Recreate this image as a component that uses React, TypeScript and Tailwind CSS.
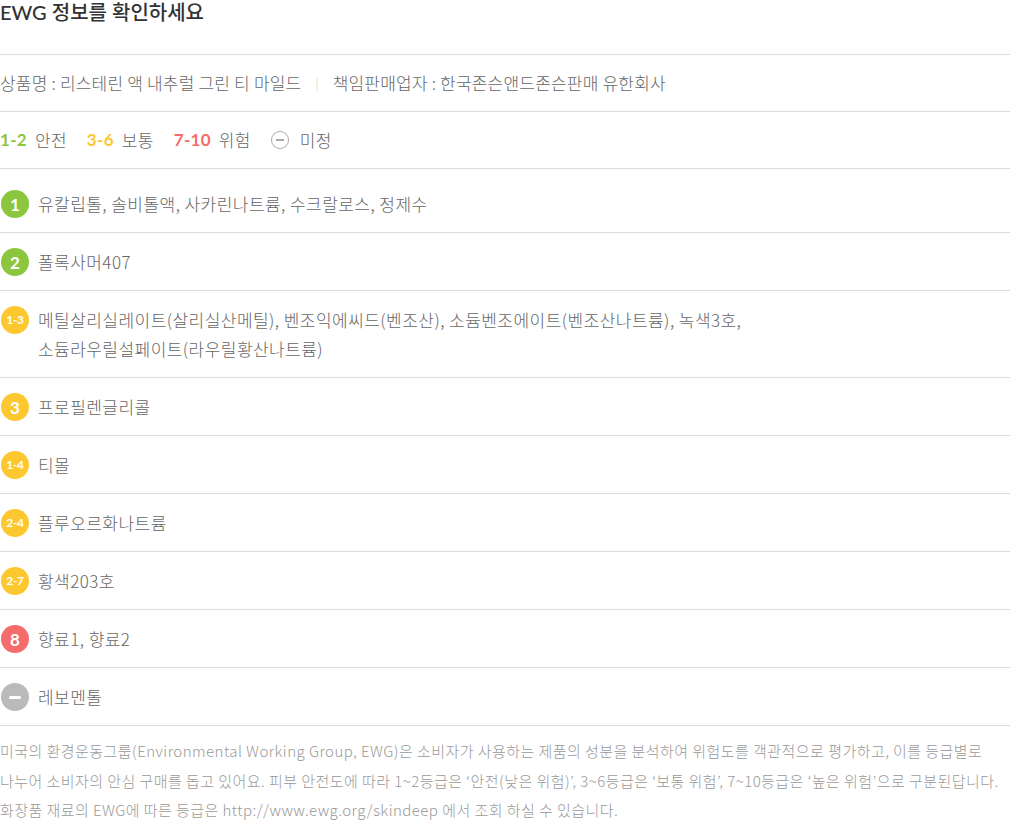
import React from "react";

type Item = { label: string; color: "green" | "yellow" | "red" | "gray"; lines: string[]; small?: boolean };

const items: Item[] = [
  { label: "1", color: "green", lines: ["유칼립톨, 솔비톨액, 사카린나트륨, 수크랄로스, 정제수"] },
  { label: "2", color: "green", lines: ["폴록사머407"] },
  {
    label: "1-3",
    color: "yellow",
    small: true,
    lines: [
      "메틸살리실레이트(살리실산메틸), 벤조익에씨드(벤조산), 소듐벤조에이트(벤조산나트륨), 녹색3호,",
      "소듐라우릴설페이트(라우릴황산나트륨)",
    ],
  },
  { label: "3", color: "yellow", lines: ["프로필렌글리콜"] },
  { label: "1-4", color: "yellow", small: true, lines: ["티몰"] },
  { label: "2-4", color: "yellow", small: true, lines: ["플루오르화나트륨"] },
  { label: "2-7", color: "yellow", small: true, lines: ["황색203호"] },
  { label: "8", color: "red", lines: ["향료1, 향료2"] },
  { label: "-", color: "gray", lines: ["레보멘톨"] },
];

const bg: Record<string, string> = {
  green: "bg-[#8cc63f]",
  yellow: "bg-[#fdc82f]",
  red: "bg-[#f66b6b]",
  gray: "bg-[#bababa]",
};

function Badge({ item }: { item: Item }) {
  return (
    <div
      className={`${bg[item.color]} w-[28px] h-[28px] rounded-full flex items-center justify-center text-white font-bold shrink-0 ml-px mt-px`}
      style={{ fontFamily: '"Lato", "Noto Sans", sans-serif' }}
    >
      {item.color === "gray" ? (
        <span className="block w-[12px] h-[3px] bg-white rounded-sm" />
      ) : (
        <span className={item.small ? "text-[12px] leading-none tracking-[-0.3px]" : "text-[17px] leading-none"}>
          {item.label}
        </span>
      )}
    </div>
  );
}

export default function App() {
  return (
    <div
      className="w-[1010px] bg-white text-[#666]"
      style={{ fontFamily: '"Noto Sans CJK KR", "Noto Sans", sans-serif' }}
    >
      <h2
        className="text-[20px] leading-[24px] font-medium text-[#333] pb-[30px] border-b border-[#dcdcdc]"
        style={{ fontFamily: '"Lato", "Noto Sans CJK KR", sans-serif' }}
      >
        EWG 정보를 확인하세요
      </h2>
      <div className="h-[57px] flex items-center text-[17px] font-light border-b border-[#dcdcdc] tracking-[0.2px]">
        <span>상품명 : 리스테린 액 내추럴 그린 티 마일드</span>
        <span className="mx-[14px] text-[#ccc] text-[12px]">|</span>
        <span>책임판매업자 : 한국존슨앤드존슨판매 유한회사</span>
      </div>
      <div className="h-[57px] flex items-center text-[17px] font-light border-b border-[#dcdcdc] tracking-[0.3px]">
        <span className="font-bold text-[#8cc63f]" style={{ fontFamily: '"Lato", sans-serif' }}>1-2</span>
        <span className="ml-[8px]">안전</span>
        <span className="ml-[20px] font-bold text-[#fdc82f]" style={{ fontFamily: '"Lato", sans-serif' }}>3-6</span>
        <span className="ml-[8px]">보통</span>
        <span className="ml-[20px] font-bold text-[#f66b6b]" style={{ fontFamily: '"Lato", sans-serif' }}>7-10</span>
        <span className="ml-[8px]">위험</span>
        <span className="ml-[20px] w-[18px] h-[18px] rounded-full border-[1.5px] border-[#aaa] flex items-center justify-center">
          <span className="block w-[8px] h-[1.5px] bg-[#aaa]" />
        </span>
        <span className="ml-[11px]">미정</span>
      </div>
      <ul className="pt-[6px]">
        {items.map((it, i) => (
          <li key={i} className="flex items-start gap-[9px] py-[14px] border-b border-[#dcdcdc]">
            <Badge item={it} />
            <div className="text-[17px] leading-[29px] font-light tracking-[0.45px]">
              {it.lines.map((l, j) => (
                <div key={j}>{l}</div>
              ))}
            </div>
          </li>
        ))}
      </ul>
      <div className="pt-[10px] text-[15px] leading-[29.5px] text-[#999] font-light tracking-[0.45px]">
        <p>
          미국의 환경운동그룹(Environmental Working Group, EWG)은 소비자가 사용하는 제품의 성분을 분석하여 위험도를 객관적으로 평가하고, 이를 등급별로
        </p>
        <p>
          나누어 소비자의 안심 구매를 돕고 있어요. 피부 안전도에 따라 1~2등급은 ‘안전(낮은 위험)’, 3~6등급은 ‘보통 위험’, 7~10등급은 ‘높은 위험’으로 구분된답니다.
        </p>
        <p>화장품 재료의 EWG에 따른 등급은 http://www.ewg.org/skindeep 에서 조회 하실 수 있습니다.</p>
      </div>
    </div>
  );
}
